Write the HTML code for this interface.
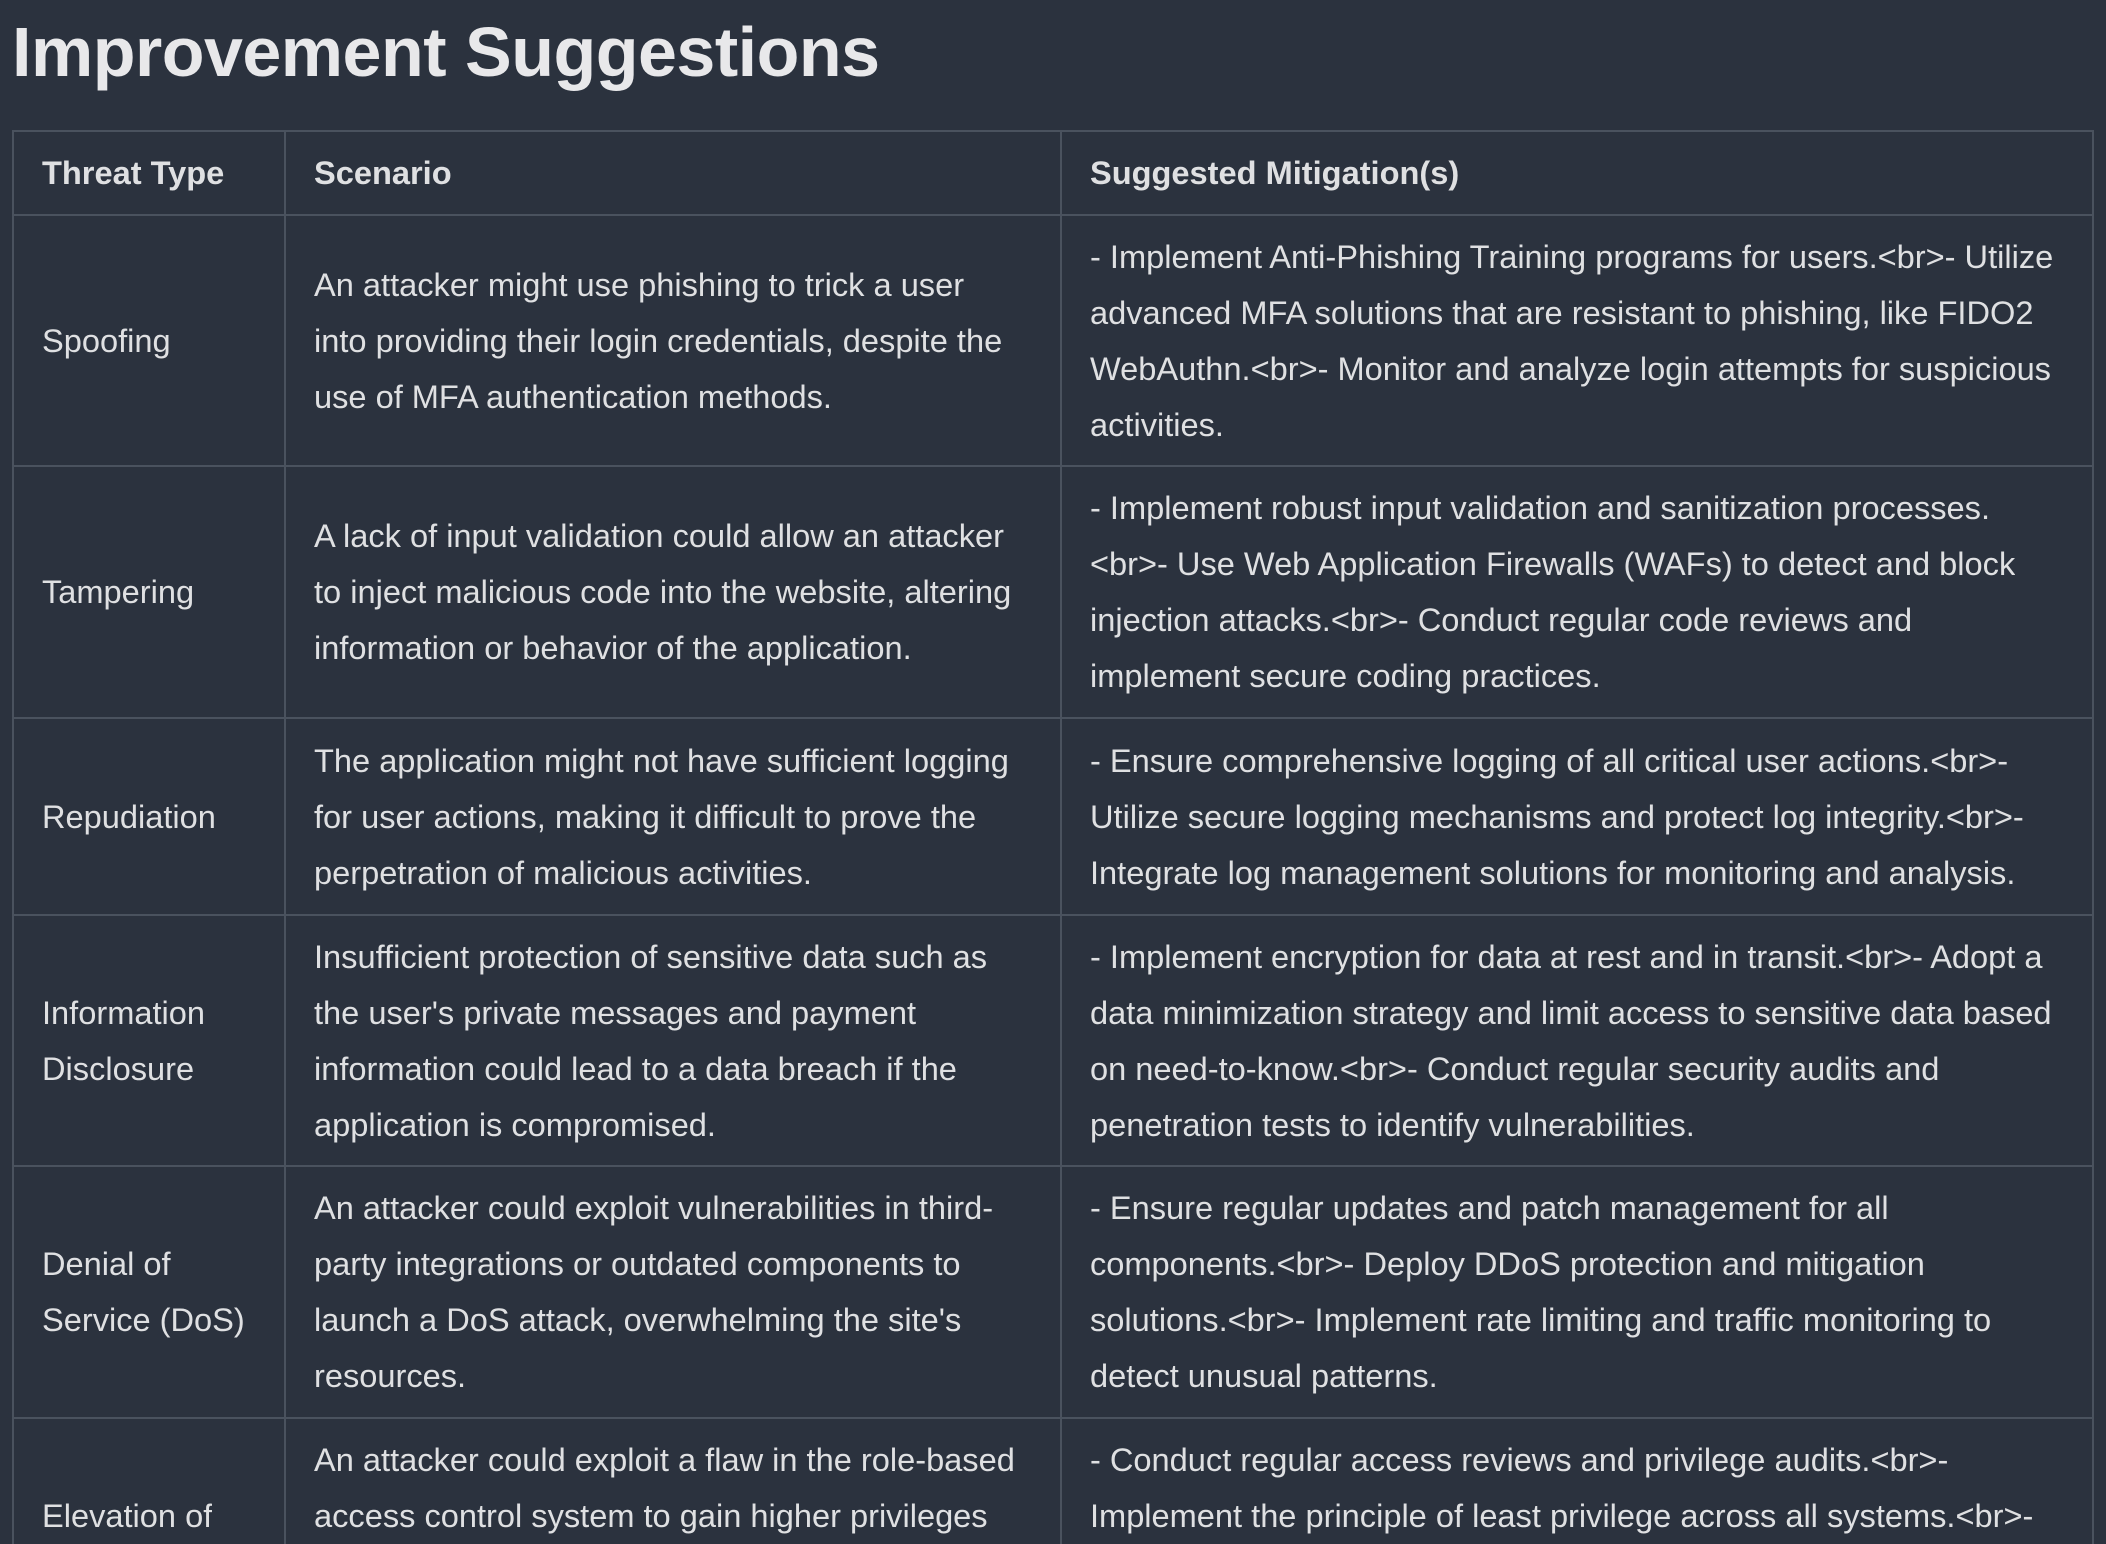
<!DOCTYPE html>
<html><head><meta charset="utf-8"><style>
html,body{margin:0;padding:0;background:#2b323e;width:2106px;height:1544px;overflow:hidden}
body{font-family:"Liberation Sans",sans-serif;color:#dfe0e2;position:relative}
h1{position:absolute;left:12px;top:2px;margin:0;font-size:70px;font-weight:bold;color:#e8e8ea;letter-spacing:-0.5px;line-height:100px;white-space:nowrap}
.c{position:absolute;display:flex;flex-direction:column;justify-content:center;font-size:32.6px;line-height:56px;white-space:nowrap;box-sizing:border-box;padding-left:30px;overflow:hidden}
.h{font-weight:bold}
.t{justify-content:flex-start}
.hl{position:absolute;left:12px;width:2082px;height:2px;background:#4a525e}
.vl{position:absolute;top:130px;width:2px;height:1414px;background:#4a525e}
</style></head><body>
<h1>Improvement Suggestions</h1>
<div class="hl" style="top:130px"></div>
<div class="hl" style="top:214px"></div>
<div class="hl" style="top:465px"></div>
<div class="hl" style="top:717px"></div>
<div class="hl" style="top:914px"></div>
<div class="hl" style="top:1165px"></div>
<div class="hl" style="top:1417px"></div>
<div class="vl" style="left:12px"></div>
<div class="vl" style="left:284px"></div>
<div class="vl" style="left:1060px"></div>
<div class="vl" style="left:2092px"></div>

<div class="c h" style="left:12px;top:130px;height:85px">Threat Type</div>
<div class="c h" style="left:284px;top:130px;height:85px">Scenario</div>
<div class="c h" style="left:1060px;top:130px;height:85px">Suggested Mitigation(s)</div>

<div class="c" style="left:12px;top:215px;height:251px">Spoofing</div>
<div class="c" style="left:284px;top:215px;height:251px"><div>An attacker might use phishing to trick a user</div><div>into providing their login credentials, despite the</div><div>use of MFA authentication methods.</div></div>
<div class="c" style="left:1060px;top:215px;height:251px"><div>- Implement Anti-Phishing Training programs for users.&lt;br&gt;- Utilize</div><div>advanced MFA solutions that are resistant to phishing, like FIDO2</div><div>WebAuthn.&lt;br&gt;- Monitor and analyze login attempts for suspicious</div><div>activities.</div></div>

<div class="c" style="left:12px;top:466px;height:252px">Tampering</div>
<div class="c" style="left:284px;top:466px;height:252px"><div>A lack of input validation could allow an attacker</div><div>to inject malicious code into the website, altering</div><div>information or behavior of the application.</div></div>
<div class="c" style="left:1060px;top:466px;height:252px"><div>- Implement robust input validation and sanitization processes.</div><div>&lt;br&gt;- Use Web Application Firewalls (WAFs) to detect and block</div><div>injection attacks.&lt;br&gt;- Conduct regular code reviews and</div><div>implement secure coding practices.</div></div>

<div class="c" style="left:12px;top:718px;height:197px">Repudiation</div>
<div class="c" style="left:284px;top:718px;height:197px"><div>The application might not have sufficient logging</div><div>for user actions, making it difficult to prove the</div><div>perpetration of malicious activities.</div></div>
<div class="c" style="left:1060px;top:718px;height:197px"><div>- Ensure comprehensive logging of all critical user actions.&lt;br&gt;-</div><div>Utilize secure logging mechanisms and protect log integrity.&lt;br&gt;-</div><div>Integrate log management solutions for monitoring and analysis.</div></div>

<div class="c" style="left:12px;top:915px;height:251px"><div>Information</div><div>Disclosure</div></div>
<div class="c" style="left:284px;top:915px;height:251px"><div>Insufficient protection of sensitive data such as</div><div>the user's private messages and payment</div><div>information could lead to a data breach if the</div><div>application is compromised.</div></div>
<div class="c" style="left:1060px;top:915px;height:251px"><div>- Implement encryption for data at rest and in transit.&lt;br&gt;- Adopt a</div><div>data minimization strategy and limit access to sensitive data based</div><div>on need-to-know.&lt;br&gt;- Conduct regular security audits and</div><div>penetration tests to identify vulnerabilities.</div></div>

<div class="c" style="left:12px;top:1166px;height:252px"><div>Denial of</div><div>Service (DoS)</div></div>
<div class="c" style="left:284px;top:1166px;height:252px"><div>An attacker could exploit vulnerabilities in third-</div><div>party integrations or outdated components to</div><div>launch a DoS attack, overwhelming the site's</div><div>resources.</div></div>
<div class="c" style="left:1060px;top:1166px;height:252px"><div>- Ensure regular updates and patch management for all</div><div>components.&lt;br&gt;- Deploy DDoS protection and mitigation</div><div>solutions.&lt;br&gt;- Implement rate limiting and traffic monitoring to</div><div>detect unusual patterns.</div></div>

<div class="c t" style="left:12px;top:1418px;height:126px;padding-top:70px"><div>Elevation of</div></div>
<div class="c t" style="left:284px;top:1418px;height:126px;padding-top:14px"><div>An attacker could exploit a flaw in the role-based</div><div>access control system to gain higher privileges</div></div>
<div class="c t" style="left:1060px;top:1418px;height:126px;padding-top:14px"><div>- Conduct regular access reviews and privilege audits.&lt;br&gt;-</div><div>Implement the principle of least privilege across all systems.&lt;br&gt;-</div></div>
</body></html>
